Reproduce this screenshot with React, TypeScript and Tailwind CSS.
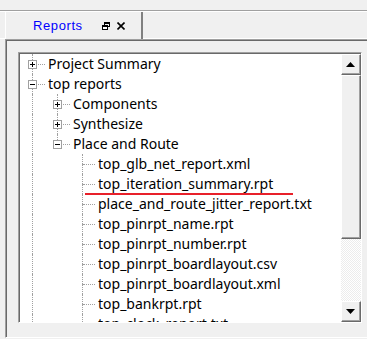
import React from "react";

type Row = {
  text: string;
  guides: boolean[];
  box?: "+" | "-";
  last?: boolean;
};

const rows: Row[] = [
  { text: "Project Summary", guides: [], box: "+" },
  { text: "top reports", guides: [], box: "-" },
  { text: "Components", guides: [true], box: "+" },
  { text: "Synthesize", guides: [true], box: "+" },
  { text: "Place and Route", guides: [true], box: "-", last: true },
  { text: "top_glb_net_report.xml", guides: [true, false] },
  { text: "top_iteration_summary.rpt", guides: [true, false] },
  { text: "place_and_route_jitter_report.txt", guides: [true, false] },
  { text: "top_pinrpt_name.rpt", guides: [true, false] },
  { text: "top_pinrpt_number.rpt", guides: [true, false] },
  { text: "top_pinrpt_boardlayout.csv", guides: [true, false] },
  { text: "top_pinrpt_boardlayout.xml", guides: [true, false] },
  { text: "top_bankrpt.rpt", guides: [true, false] },
  { text: "top_clock_report.txt", guides: [true, false] },
];

const ExpandBox = ({ sign }: { sign: "+" | "-" }) => (
  <div className="absolute left-[8px] top-[6px] size-[9px] border border-[#a0a0a0] bg-white">
    <svg width="7" height="7" viewBox="0 0 7 7" className="block">
      <rect x="1" y="3" width="5" height="1" fill="#000" />
      {sign === "+" && <rect x="3" y="1" width="1" height="5" fill="#000" />}
    </svg>
  </div>
);

const TreeRow = ({ row }: { row: Row }) => (
  <div className="flex h-[20px] items-center">
    {row.guides.map((g, i) => (
      <div key={i} className="relative h-full w-[25px] shrink-0">
        {g && <div className="absolute left-[12px] top-0 h-full border-l border-dotted border-[#a0a0a0]" />}
      </div>
    ))}
    <div className="relative h-full w-[25px] shrink-0">
      <div className="absolute left-[12px] top-0 h-[10px] border-l border-dotted border-[#a0a0a0]" />
      {!row.last && (
        <div className="absolute left-[12px] top-[10px] h-[10px] border-l border-dotted border-[#a0a0a0]" />
      )}
      <div className="absolute left-[13px] top-[10px] w-[12px] border-t border-dotted border-[#a0a0a0]" />
      {row.box && <ExpandBox sign={row.box} />}
    </div>
    <span className="whitespace-nowrap pl-[3px] text-[14px] leading-[20px] text-black">{row.text}</span>
  </div>
);

const ScrollButton = ({ dir }: { dir: "up" | "down" }) => (
  <div className="h-[21px] border-l border-t border-l-white border-t-white border-r border-b border-r-[#696969] border-b-[#696969]">
    <div className="flex h-full items-center justify-center border-r border-b border-r-[#a0a0a0] border-b-[#a0a0a0] bg-[#f0f0f0]">
      <svg width="9" height="5" viewBox="0 0 9 5">
        {dir === "up" ? (
          <polygon points="4.5,0 9,5 0,5" fill="#000" />
        ) : (
          <polygon points="0,0 9,0 4.5,5" fill="#000" />
        )}
      </svg>
    </div>
  </div>
);

export default function App() {
  return (
    <div className="h-[339px] w-[367px] overflow-hidden bg-[#f0f0f0] font-['Noto_Sans',sans-serif]">
      <div className="h-[10px]" />
      <div className="border-t border-[#a0a0a0]">
        <div className="flex h-[28px] border-t border-white">
          <div className="w-[5px] border-b border-white" />
          <div className="flex w-[138px] items-center border-l border-white border-r-2 border-r-[#808080] pl-[27px]">
            <span className="font-['Liberation_Sans',sans-serif] text-[13px] tracking-[0.6px] text-[#0000ff]">Reports</span>
            <svg width="8" height="8" viewBox="0 0 8 8" className="ml-[19px]">
              <rect x="2.5" y="0.5" width="5" height="4" fill="none" stroke="#000" />
              <rect x="2" y="0" width="6" height="2" fill="#000" />
              <rect x="0.5" y="3.5" width="5" height="4" fill="#fff" stroke="#000" />
              <rect x="0" y="3" width="6" height="2" fill="#000" />
            </svg>
            <svg width="8" height="8" viewBox="0 0 8 8" className="ml-[7px]">
              <path d="M0.5 0.5 L7.5 7.5 M7.5 0.5 L0.5 7.5" stroke="#000" strokeWidth="1.6" />
            </svg>
          </div>
          <div className="flex-1 border-b border-white" />
        </div>
      </div>
      <div className="ml-[5px] h-[299px] border-t border-l border-[#a0a0a0] border-b border-b-white">
        <div className="h-full border-t border-l border-[#696969] pl-[11px] pt-[11px] pb-[13px]">
          <div className="relative flex h-[271px] w-[344px] border-t border-l border-[#a0a0a0] border-r border-b border-r-white border-b-white">
            <div className="flex flex-1 border-t border-l border-[#696969] bg-white">
              <div className="flex-1 overflow-hidden pl-[0px]">
                {rows.map((r, i) => (
                  <TreeRow key={i} row={r} />
                ))}
              </div>
              <div className="flex w-[20px] flex-col">
                <ScrollButton dir="up" />
                <div className="h-[164px] border-l border-t border-l-white border-t-white border-r border-b border-r-[#696969] border-b-[#696969]">
                  <div className="h-full border-r border-b border-r-[#a0a0a0] border-b-[#a0a0a0] bg-[#f0f0f0]" />
                </div>
                <div className="flex-1 bg-[repeating-conic-gradient(#ffffff_0_25%,#ececec_0_50%)] bg-[length:2px_2px]" />
                <ScrollButton dir="down" />
              </div>
            </div>
            <div className="absolute left-[66px] top-[140px] h-[2px] w-[208px] bg-[#e8202a]" />
          </div>
        </div>
      </div>
    </div>
  );
}
